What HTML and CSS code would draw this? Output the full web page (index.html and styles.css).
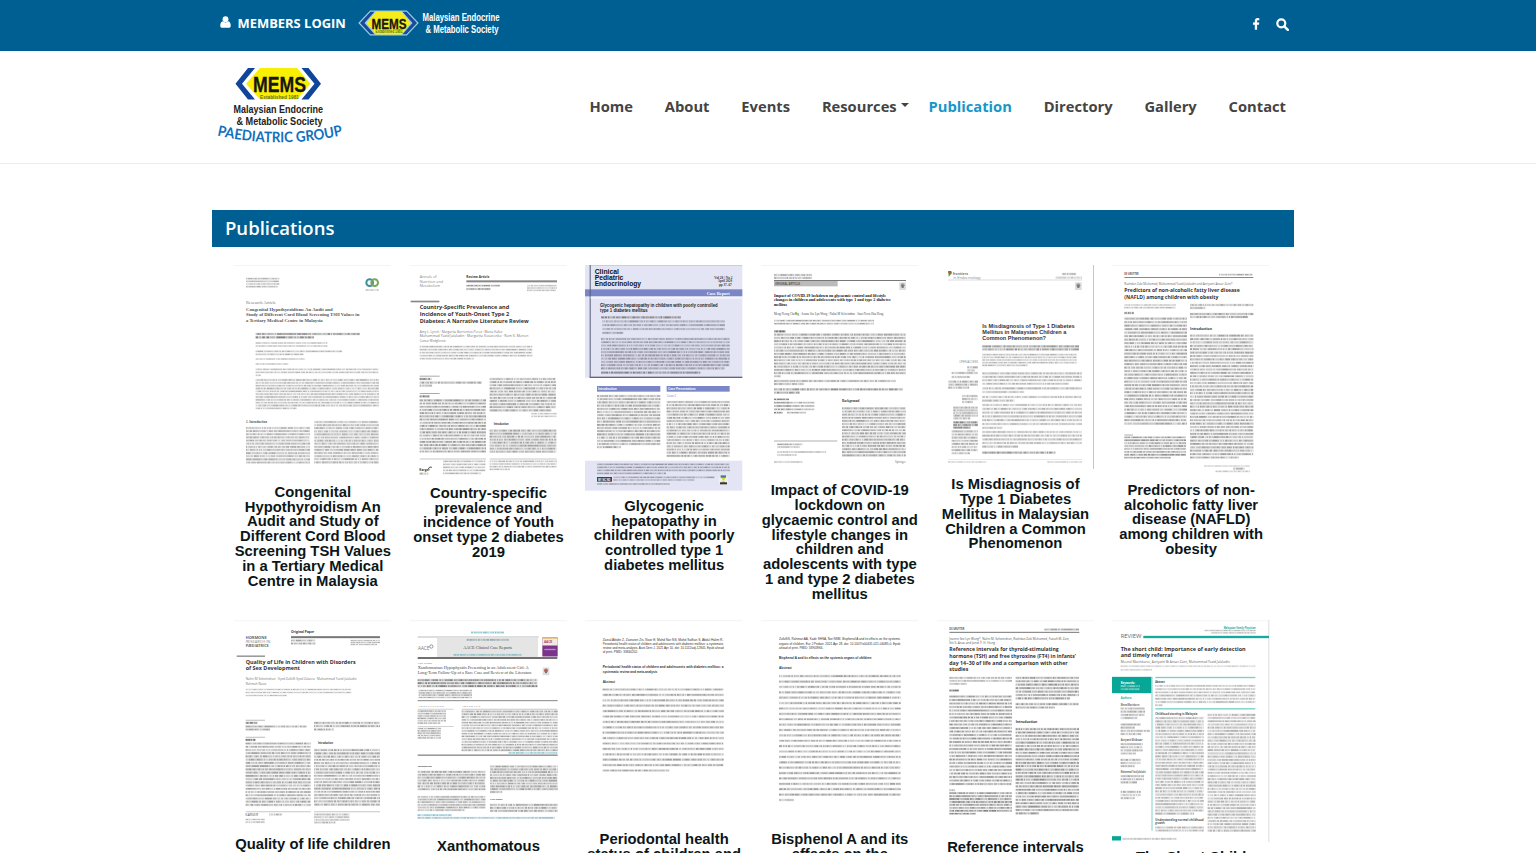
FILE: index.html
```html
<!DOCTYPE html>
<html lang="en">
<head>
<meta charset="utf-8">
<title>Publications - MEMS Paediatric Group</title>
<link rel="stylesheet" href="styles.css">
</head>
<body>
<div class="topbar">
  <div class="topbar-inner">
    <a class="login"><svg class="user" viewBox="0 0 12 13"><circle cx="6" cy="3.4" r="3.2"/><path d="M3 5.800C1.200 6.200.3 8.400.3 10.500.3 12 1.100 12.800 2.400 12.800h7.200c1.300 0 2.100-.8 2.100-2.300 0-2.100-.9-4.300-2.700-4.700C7.300 7.300 4.700 7.300 3 5.800z"/></svg><span>MEMBERS LOGIN</span></a>
    <svg class="mems-small" viewBox="0 0 144 30">
      <path d="M12.500 3.500H48.500L59.500 15 48.500 26.500H12.500L1.500 15z" fill="#9ccbe5" stroke="#9ccbe5" stroke-width="1.800"/>
      <path d="M12.500 3.800h4L6.500 15l10 11.200h-4L2 15zM48.500 3.800h-4L54.500 15l-10 11.200h4L59 15z" fill="#174b99"/>
      <path d="M18 3.500H43.500L52.500 15 43.500 26.500H18L8.500 15z" fill="#f6ec1c"/>
      <text x="13.500" y="20.500" class="logo-word" font-size="15" textLength="35" lengthAdjust="spacingAndGlyphs">MEMS</text>
      <text x="17.500" y="25.200" class="logo-est" font-size="4.500" textLength="27" lengthAdjust="spacingAndGlyphs">Established 1981</text>
      <text x="64.500" y="13.200" class="society-light" textLength="77" lengthAdjust="spacingAndGlyphs">Malaysian Endocrine</text>
      <text x="67.500" y="24.700" class="society-light" textLength="73" lengthAdjust="spacingAndGlyphs">&amp; Metabolic Society</text>
    </svg>
    <div class="tools">
      <svg class="fb" viewBox="0 0 8 13"><path d="M7.600.2v2.200H6.300c-.9 0-1.100.5-1.100 1.100V5h2.300l-.3 2.300h-2v5.500H2.700V7.300h-2V5h2V3.200C2.700 1.200 3.900.1 5.800.1z"/></svg>
      <svg class="search" viewBox="0 0 13 13"><circle cx="5.300" cy="5.300" r="4" fill="none" stroke="#fff" stroke-width="2.200"/><path d="M8.300 8.300l3.500 3.500" stroke="#fff" stroke-width="2.500" stroke-linecap="round"/></svg>
    </div>
  </div>
</div>
<header class="header">
  <div class="header-inner">
    <svg class="brand" viewBox="0 0 130 84">
      <path d="M43 3H80L93.500 18.800 80 34.500H43L29 18.800z" fill="#f9ef05"/>
      <path d="M31 3h7L25 18.800l13 15.700h-7L18.500 18.800zM84.500 3h7L104 18.800 91.500 34.500h-7l13-15.700z" fill="#10459b"/>
      <text x="36" y="26.800" class="logo-word" font-size="22.500" textLength="53" lengthAdjust="spacingAndGlyphs">MEMS</text>
      <text x="43" y="33.800" class="logo-est" font-size="5.800" textLength="39" lengthAdjust="spacingAndGlyphs">Established 1981</text>
      <text x="16.500" y="47.500" class="society" textLength="89.500" lengthAdjust="spacingAndGlyphs">Malaysian Endocrine</text>
      <text x="19.500" y="60.300" class="society" textLength="86" lengthAdjust="spacingAndGlyphs">&amp; Metabolic Society</text>
      <path id="arc" d="M0 70.500Q63 84.500 126.500 70" fill="none"/>
      <text class="group"><textPath href="#arc" textLength="127" lengthAdjust="spacingAndGlyphs">PAEDIATRIC GROUP</textPath></text>
    </svg>
    <nav class="nav">
      <a>Home</a><a>About</a><a>Events</a><a class="has-menu">Resources<i class="caret"></i></a><a class="active">Publication</a><a>Directory</a><a>Gallery</a><a>Contact</a>
    </nav>
  </div>
</header>
<main class="main">
  <h1 class="heading">Publications</h1>
  <div class="grid" id="grid"></div>
</main>
<script src="thumbs.js"></script>
</body>
</html>
```
FILE: styles.css
```css
* { box-sizing: border-box; }
body { margin: 0; height: 853px; overflow: hidden; background: #fff; font-family: "Open Sans", "Noto Sans", sans-serif; }
.topbar { height: 51px; background: #005f92; color: #fff; }
.topbar-inner { width: 1082px; margin-left: 212px; padding: 8px 5px 0 8px; display: flex; align-items: flex-start; }
.login { display: flex; align-items: flex-start; width: 138px; font-size: 12.950px; font-weight: 700; line-height: 31px; white-space: nowrap; }
.login .user { width: 11px; height: 12px; margin: 8px 6.500px 0 0; fill: #fff; }
.mems-small { width: 144px; height: 30px; overflow: visible; }
.tools { display: flex; gap: 16px; margin: 9.500px 0 0 auto; }
.fb { width: 8px; height: 12px; fill: #fff; }
.search { width: 13px; height: 13px; }
.logo-word { font-family: "Liberation Sans", Arial, sans-serif; font-weight: 700; fill: #161616; stroke: #161616; stroke-width: .3; }
.logo-est { font-family: "Liberation Sans", Arial, sans-serif; font-weight: 700; fill: #56702a; }
.society, .society-light { font: 700 11.300px "Liberation Sans", Arial, sans-serif; fill: #222; }
.society-light { font-size: 10px; fill: #fff; }
.group { font: 700 14.500px Lato, "Open Sans", sans-serif; fill: #1370bd; }
.header { height: 113px; border-bottom: 1px solid #ececec; }
.header-inner { width: 1082px; margin-left: 212px; padding: 14px 8px 0 5px; display: flex; justify-content: space-between; align-items: flex-start; }
.brand { width: 130px; height: 84px; overflow: visible; }
.nav { display: flex; gap: 31.850px; padding-top: 28px; font-size: 14.730px; font-weight: 700; line-height: 27px; color: #444; }
.has-menu { display: flex; align-items: center; margin-right: -12px; }
.caret { margin: -3px 0 0 4px; border: 4px solid transparent; border-top-color: #444; border-bottom: 0; }
.active { color: #1697c9; }
.main { width: 1082px; height: 643px; margin: 46px 0 0 212px; overflow: hidden; }
.heading { margin: 0; height: 37px; padding-left: 13px; background: #005f92; color: #fff; font-size: 18.500px; font-weight: 600; line-height: 35.500px; }
.grid { display: grid; grid-template-columns: repeat(6, 175.670px); grid-auto-rows: 354.500px; padding: 18.300px 0 0 13px; }
.card { padding: 0 9.170px; }
.thumb { display: block; width: 157.330px; }
.title { margin: 8px -8px 0; font: 700 14.800px/14.800px "Liberation Sans", Arial, sans-serif; color: #0b1618; text-align: center; white-space: pre-line; }
.sans { font-family: "Liberation Sans", Arial, sans-serif; }
.serif { font-family: "Liberation Serif", "Times New Roman", serif; }
.human { font-family: "Open Sans", sans-serif; }
```
FILE: thumbs.js
```js
// Each page thumbnail is drawn at three units per pixel.
let seed = 7;
const rnd = () => (seed = (seed * 16807) % 2147483647) / 2147483647;
const R = (x, y, w, h, c = '#777') => `<rect x="${x}" y="${y}" width="${w}" height="${h}" fill="${c}"/>`;
const T = (x, y, s, w, size, cls = 'human', c = '#333', b = 700) =>
  `<text x="${x}" y="${y}" class="${cls}" font-size="${size}" font-weight="${b}" fill="${c}" textLength="${w}" lengthAdjust="spacingAndGlyphs">${s}</text>`;
// Paragraph: word-like strokes, n lines, over a pale band that stands for the ascenders
function P(x, y, w, n, step = 10.5, c = '#a2a2a2', last = .7, sw = 5) {
  let out = '';
  for (let i = 0; i < n; i++) {
    const end = x + (i === n - 1 ? w * last : w);
    const ly = (y + i * step).toFixed(1);
    const d = ['', '', ''];
    let px = x;
    while (px < end) {
      const len = Math.min(end - px, 2 + rnd() * 6);
      d[Math.floor(rnd() * 3)] += `M${px.toFixed(1)} ${ly}h${len.toFixed(1)}`;
      px += len + (rnd() < .3 ? 3 : .4);
    }
    out += `<path d="M${x} ${ly}H${end.toFixed(1)}" stroke="${c}" stroke-opacity=".22" stroke-width="${sw + 3}"/>`;
    d.forEach((p, k) => { if (p) out += `<path d="${p}" stroke="${c}" stroke-opacity="${[.45, .68, .9][k]}" stroke-width="${sw}"/>`; });
  }
  return out;
}
const badge = (x, y, c = '#999') => R(x, y, 20, 23, '#ddd') + `<circle cx="${x + 10}" cy="${y + 9}" r="6" fill="${c}"/>` + R(x + 7, y + 8, 6, 9, '#777');
const top1 = (x, y) => R(x, y, 472, 3, '#f4f4f4');

const docs = [
  { x: 27, y: 31, h: 211.5, t: 'Congenital\nHypothyroidism An\nAudit and Study of\nDifferent Cord Blood\nScreening TSH Values\nin a Tertiary Medical\nCentre in Malaysia', d: () =>
    top1(27, 31) + P(63, 72, 100, 4, 8, '#a5a5a5', .95, 3.5) +
    '<circle cx="434" cy="84" r="10" fill="none" stroke="#3d8f9d" stroke-width="6"/><circle cx="449" cy="84" r="10" fill="none" stroke="#78a65a" stroke-width="6"/>' + P(422, 106, 40, 1, 8, '#aaa', 1, 3) +
    T(63, 149, 'Research Article', 90, 12, 'serif', '#777', 400) +
    T(63, 169, 'Congenital Hypothyroidism: An Audit and', 260, 14, 'serif', '#555') + T(63, 185, 'Study of Different Cord Blood Screening TSH Values in', 340, 14, 'serif', '#555') + T(63, 201, 'a Tertiary Medical Centre in Malaysia', 230, 14, 'serif', '#555') +
    P(92, 238, 312, 2, 10, '#777', .56) + P(92, 265, 215, 2, 9, '#aaa', 1, 3.5) + P(92, 290, 260, 2, 9, '#aaa', .55, 3.5) + P(92, 313, 147, 1, 9, '#aaa', 1, 3.5) + P(92, 328, 98, 1, 9, '#aaa', 1, 3.5) +
    P(92, 344, 368, 3, 9, '#b0b0b0', .04, 3.5) + P(92, 376, 370, 11, 8.5, '#aaa', .33, 4) +
    T(63, 506, '1. Introduction', 63, 10, 'serif', '#555') + P(63, 520, 192, 12, 9.4, '#a6a6a6', 1) + P(268, 502, 193, 14, 9.3, '#a6a6a6', 1) },
  { x: 554, y: 31, h: 212.5, t: 'Country-specific\nprevalence and\nincidence of Youth\nonset type 2 diabetes\n2019', d: () =>
    top1(554, 31) + T(583, 71, 'Annals of', 51, 11, 'human', '#888', 400) + T(583, 84, 'Nutrition and', 70, 11, 'human', '#888', 400) + T(583, 97, 'Metabolism', 61, 11, 'human', '#888', 400) +
    T(723, 70, 'Review Article', 69, 10) + R(723, 77, 272, 6, '#888') + P(723, 93, 100, 2, 10, '#888', .72, 4) + P(905, 93, 90, 3, 7, '#aaa', .96, 3) +
    R(556, 138, 86, 5, '#888') + T(583, 163, 'Country-Specific Prevalence and', 269, 17) + T(583, 183, 'Incidence of Youth-Onset Type 2', 269, 17) + T(583, 204, 'Diabetes: A Narrative Literature Review', 327, 17) +
    T(583, 234, 'Amy L. Lynch · Margarita Barrientos-Perez · Mona Hafez', 248, 11, 'human', '#777', 400) + T(583, 248, 'Muhammad Yazid Jalaludin · Margarita Kovarenko · Ram K. Menon', 326, 11, 'human', '#777', 400) + T(583, 262, 'Caesar Wedgforest', 78, 10, 'human', '#777', 400) +
    P(583, 276, 338, 5, 9, '#aaa', .48, 4) + R(583, 363, 60, 3, '#aaa') + P(583, 373, 35, 1, 9, '#666', 1) + P(583, 384, 187, 2, 9, '#999', .2) + R(583, 415, 60, 3, '#aaa') + P(583, 425, 31, 1, 9, '#666', 1) + P(583, 437, 199, 17, 9.6, '#909090', 1) +
    P(793, 373, 199, 11, 9.4, '#999', .93) + P(918, 477, 76, 2, 8, '#aaa', 1, 3) + T(805, 510, 'Introduction', 45, 8) + P(793, 528, 200, 8, 9, '#999', 1) + R(583, 612, 199, 2, '#aaa') + R(793, 612, 201, 2, '#aaa') + P(653, 620, 127, 5, 9, '#aaa', .9, 3.5) + P(793, 620, 201, 4, 8, '#aaa', .3, 3.5) + T(582, 648, 'Karger', 31, 11) + '<path d="M609 643l4-6 7 1" stroke="#555" fill="none" stroke-width="3"/>' + P(583, 657, 37, 1, 9) },
  { x: 31, y: 31, h: 225.5, t: 'Glycogenic\nhepatopathy in\nchildren with poorly\ncontrolled type 1\ndiabetes mellitus', d: () =>
    R(31, 31, 472, 338, '#e4e5f4') + R(31, 104, 472, 21, '#7b86c7') + R(46, 31, 457, 2, '#bcc0dc') + R(45, 31, 3, 338, '#555b78') + R(45, 366, 458, 4, '#62677d') + R(48, 126, 455, 6, '#f4f4fa') +
    T(60, 57, 'Clinical', 73, 19, 'sans', '#111') + T(60, 76, 'Pediatric', 86, 19, 'sans', '#111') + T(60, 94, 'Endocrinology', 139, 19, 'sans', '#111') +
    T(419, 72, 'Vol 28 / No 2', 54, 9, 'serif') + T(429, 82, 'April 2020', 43, 9, 'serif') + T(433, 93, 'pp 37–67', 38, 9, 'serif') + T(396, 120, 'Case Report', 69, 14, 'serif', '#fff') +
    T(76, 158, 'Glycogenic hepatopathy in children with poorly controlled', 353, 14, 'sans', '#222') + T(76, 171, 'type 1 diabetes mellitus', 143, 14, 'sans', '#222') +
    P(79, 188, 239, 1, 9, '#777', 1) + P(83, 200, 368, 4, 11.5, '#9294a3', .17) + P(79, 253, 386, 10, 9.8, '#8d8f9e', .96) + P(79, 354, 298, 1, 9, '#737584', 1) +
    R(67, 394, 190, 17, '#7b86c7') + R(276, 394, 189, 17, '#7b86c7') + T(70, 407, 'Introduction', 56, 9, 'sans', '#fff') + T(280, 407, 'Case Presentations', 83, 9, 'sans', '#fff') + P(67, 424, 190, 17, 9.6, '#999', .38) + T(276, 427, 'Case 1', 28, 9, 'sans', '#7b86c7', 400) + P(276, 442, 189, 18, 9.5, '#999', 1) +
    R(31, 618, 472, 90, '#e4e5f4') + P(67, 629, 398, 4, 9, '#8b8d9b', .52, 4) + R(67, 667, 45, 14, '#444') + T(71, 678, 'BY NC ND', 36, 9, 'sans', '#fff') + P(116, 668, 303, 2, 8, '#9294a3', .8, 3.5) + P(67, 688, 218, 1, 9, '#888', 1, 3.5) + '<circle cx="446" cy="676" r="15" fill="#eee"/><path d="M437 665h18l-8 15zM436 688h20l-10-12z" fill="#d8d543"/>' + R(438, 662, 16, 7, '#447b99') + R(436, 683, 21, 6, '#333') },
  { x: 558, y: 31, h: 210, t: 'Impact of COVID-19\nlockdown on\nglycaemic control and\nlifestyle changes in\nchildren and\nadolescents with type\n1 and type 2 diabetes\nmellitus', d: () =>
    top1(558, 31) + P(597, 61, 114, 2, 9, '#999', 1, 4) + R(597, 76, 396, 3, '#777') + R(597, 79, 191, 16, '#bbb') + T(600, 90, 'ORIGINAL ARTICLE', 75, 9, 'sans', '#555') + badge(973, 83) +
    T(597, 126, 'Impact of COVID-19 lockdown on glycaemic control and lifestyle', 336, 13, 'serif', '#111') + T(597, 140, 'changes in children and adolescents with type 1 and type 2 diabetes', 350, 13, 'serif', '#111') + T(597, 154, 'mellitus', 39, 13, 'serif', '#111') +
    T(597, 180, 'Meng-Yeong Cheong · Jeanne Sze Lyn Wong · Nalini M Selveindran · Janet Yeow Hua Hong', 328, 10, 'serif', '#444', 400) + '<circle cx="663" cy="176" r="4" fill="#80d240"/>' + P(597, 198, 300, 2, 9, '#999', 1, 3.500) + P(597, 230, 34, 1, 9, '#555', 1) + P(597, 240, 395, 14, 9.6, '#999', .05) + P(597, 379, 366, 2, 9, '#999', .25) + P(597, 404, 386, 2, 10, '#888', .2) +
    P(597, 434, 45, 5, 10, '#777', .6, 4) + P(636, 444, 82, 4, 10, '#999', .7, 4) + T(801, 443, 'Background', 52, 9, 'serif') + P(801, 461, 191, 16, 9.4, '#999', 1) + R(597, 558, 190, 2, '#888') + P(607, 569, 76, 2, 8, '#999', .9, 3.5) + P(607, 592, 146, 2, 9, '#999', .4, 3.5) + P(597, 622, 85, 1, 8, '#aaa', 1, 3.5) + T(960, 626, 'Springer', 32, 9, 'serif', '#777', 400) },
  { x: 35, y: 31, h: 204, t: 'Is Misdiagnosis of\nType 1 Diabetes\nMellitus in Malaysian\nChildren a Common\nPhenomenon', d: () =>
    R(504, 31, 3, 612, '#aaa') + '<path d="M69 49h9l2 7-10 10z" fill="#4b9b5d"/><path d="M69 49h7v7h-7z" fill="#bf4f33"/>' + T(82, 62, 'frontiers', 46, 11, 'human', '#777') + T(84, 73, 'in Endocrinology', 82, 10, 'sans', '#999', 400) + P(411, 58, 59, 1) + P(391, 69, 79, 1, 9, '#bbb', 1) + R(68, 75, 402, 2, '#ccc') + badge(449, 83) +
    T(171, 221, 'Is Misdiagnosis of Type 1 Diabetes', 277, 16, 'sans') + T(171, 239, 'Mellitus in Malaysian Children a', 252, 16, 'sans') + T(171, 257, 'Common Phenomenon?', 191, 16, 'sans') +
    P(171, 275, 290, 2, 9, '#888', 1) + P(171, 300, 283, 5, 8, '#aaa', .48, 3.5) +
    P(171, 356, 299, 4, 10.4, '#aaa', .87) + P(171, 401, 299, 2, 11, '#aaa', .42) + P(171, 427, 299, 2, 11, '#aaa', .32) + P(171, 451, 299, 7, 11.4, '#aaa', .2) + P(171, 532, 299, 5, 11, '#aaa', .36) + P(171, 594, 219, 1, 9, '#888', 1) +
    T(102, 325, 'OPEN ACCESS', 56, 8, 'sans', '#888', 400) + P(126, 338, 32, 2, 9) + P(79, 355, 78, 2, 12) + P(69, 381, 89, 3, 9) + P(110, 424, 47, 3, 9) + P(84, 459, 73, 5, 8) + P(84, 503, 74, 3, 8, '#777') + P(79, 530, 78, 8, 9.4) + R(68, 613, 402, 2, '#ddd') + P(68, 622, 115, 1, 8, '#bbb', 1, 3) + P(366, 622, 104, 1, 8, '#bbb', 1, 3) },
  { x: 562, y: 31, h: 209.5, t: 'Predictors of non-\nalcoholic fatty liver\ndisease (NAFLD)\namong children with\nobesity', d: () =>
    top1(562, 31) + T(599, 62, 'DE GRUYTER', 43, 8, 'human', '#555') + P(883, 60, 102, 1, 8, '#999', 1, 4) + R(599, 67, 387, 3, '#888') + T(599, 91, 'Rashdan Zaki Mohamed, Muhammad Yazid Jalaludin and Azriyanti Anuar Zaini*', 325, 10, 'human', '#666', 400) + T(599, 112, 'Predictors of non-alcoholic fatty liver disease', 346, 16) + T(599, 133, '(NAFLD) among children with obesity', 282, 16) +
    P(599, 151, 154, 2, 8, '#aaa', 1, 3.5) + P(599, 175, 28, 1, 9, '#666', 1) + P(599, 192, 188, 31, 10.5, '#999', 1) + P(796, 151, 190, 2, 9, '#999', .25) + P(796, 178, 190, 2, 9, '#888', .92) + T(796, 226, 'Introduction', 66, 11) + P(796, 243, 190, 37, 10.15, '#999', .77) + R(599, 540, 26, 2, '#888') + P(599, 548, 185, 8, 8.7, '#888', .75, 4) + P(838, 634, 137, 1, 8, '#bbb', 1, 3.5) + P(925, 642, 50, 1) + P(873, 650, 102, 1, 8, '#bbb', 1, 3.5) },
  { x: 27, y: 14.5, h: 209.5, t: 'Quality of life children', d: () =>
    top1(27, 15) + T(62, 73, 'HORMONE', 63, 10, 'human', '#666') + T(62, 85, 'RESEARCH IN', 74, 10, 'human', '#888', 400) + T(62, 97, 'PÆDIATRICS', 69, 9, 'human', '#666') + T(198, 53, 'Original Paper', 70, 10) + R(198, 63, 267, 6, '#777') + P(198, 76, 73, 2, 9, '#999', 1, 4) + P(377, 76, 88, 3, 6, '#aaa', .9, 3) + R(35, 121, 85, 4, '#888') + T(62, 146, 'Quality of Life in Children with Disorders', 330, 16) + T(62, 166, 'of Sex Development', 163, 16) +
    T(62, 194, 'Nalini M Selveindran · Syed Zulkifli Syed Zakaria · Muhammad Yazid Jalaludin', 333, 10, 'human', '#777', 400) + T(62, 209, 'Rahmah Rasat', 62, 10, 'human', '#777', 400) + P(62, 223, 317, 3, 9, '#aaa', .39, 3.5) + R(62, 314, 58, 2, '#999') + P(62, 323, 36, 1, 9, '#666', 1) + P(62, 334, 183, 2, 9, '#999', .4) + P(267, 323, 198, 3, 10, '#999', .3) + R(62, 365, 58, 2, '#999') + P(62, 374, 29, 1, 9, '#666', 1) + P(62, 385, 195, 20, 9.7, '#999', 1) + T(279, 388, 'Introduction', 45, 9) + P(267, 405, 198, 18, 9.6, '#999', 1) + R(62, 589, 195, 2, '#aaa') + R(267, 589, 198, 2, '#aaa') + T(61, 602, 'KARGER', 38, 10, 'human', '#555', 400) + P(133, 598, 55, 1) + P(62, 613, 57, 2, 8, '#aaa', 1, 3.5) + P(267, 598, 107, 4, 8, '#aaa', .6, 4) },
  { x: 554, y: 14.5, h: 211.3, t: 'Xanthomatous', d: () =>
    top1(554, 15) + P(737, 52, 99, 1, 8, '#65b7c9', 1, 4) + R(577, 64, 363, 3, '#bbb') + R(635, 67, 303, 59, '#e5e5e5') + R(577, 126, 419, 5, '#555') + T(578, 105, 'AACE', 34, 15, 'human', '#777', 400) + '<circle cx="618" cy="94" r="5" fill="none" stroke="#666" stroke-width="2"/>' + P(724, 74, 127, 1, 8, '#7f9ba0', 1, 4) + T(714, 101, 'AACE Clinical Case Reports', 146, 13, 'serif', '#444', 400) + P(685, 119, 204, 1, 8, '#78b4bd', 1, 4) + R(951, 67, 46, 57, '#7a348c') + R(951, 67, 46, 24, '#f4eae1') + R(951, 67, 46, 3, '#d9a23c') + T(956, 83, 'AACE', 25, 8, 'sans', '#993d82') + R(957, 101, 34, 4, '#b98bc2') +
    T(577, 146, 'Case Report', 43, 8, 'serif', '#666', 400) + T(577, 163, 'Xanthomatous Hypophysitis Presenting in an Adolescent Girl: A', 333, 13, 'serif', '#444', 400) + T(577, 177, 'Long-Term Follow-Up of a Rare Case and Review of the Literature', 343, 13, 'serif', '#444', 400) + badge(952, 157, '#d65d48') + P(577, 195, 359, 3, 9, '#777', 1) + P(580, 226, 160, 4, 7, '#999', 1, 3.5) + R(577, 255, 420, 3, '#888') + T(578, 276, 'A R T I C L E  I N F O', 78, 8, 'serif', '#888') + T(709, 276, 'A B S T R A C T', 56, 8, 'serif', '#888') + R(577, 281, 108, 2, '#bbb') + P(577, 288, 85, 6, 7.2, '#999', .8, 3.5) + R(577, 333, 108, 2, '#bbb') + P(577, 340, 70, 5, 7, '#999', 1, 3.5) + R(709, 281, 287, 2, '#aaa') + P(709, 289, 288, 15, 8.3, '#999', 1, 4) + P(850, 413, 146, 1, 8, '#70b8c4', 1, 4) + R(577, 418, 420, 4, '#888') +
    T(577, 455, 'Introduction', 42, 8, 'serif') + P(577, 470, 203, 7, 8.7, '#999', 1) + P(794, 454, 203, 10, 8.5, '#999', .18) + P(577, 545, 203, 6, 8, '#999', .7, 4) + T(794, 554, 'Case Report', 38, 8, 'serif') + P(794, 569, 203, 3, 9, '#999', 1) + P(577, 600, 103, 1, 8, '#69afd0', 1, 4) + P(577, 608, 411, 1, 8, '#7fafc0', 1, 4) },
  { x: 31, y: 14.5, h: 204.3, t: 'Periodontal health\nstatus of children and', d: () =>
    top1(31, 15) + T(84, 79, 'Zainal Abidin Z, Zainuren Zis, Noor E, Mohd Nor NS, Mohd Saffian S, Abdul Halim R.', 362, 9, 'sans', '#333', 400) + T(84, 91, 'Periodontal health status of children and adolescents with diabetes mellitus: a systematic', 363, 9, 'sans', '#333', 400) + T(84, 103, 'review and meta-analysis. Aust Dent J. 2021 Apr 10. doi: 10.1111/adj.12845. Epub ahead', 363, 9, 'sans', '#333', 400) + T(84, 115, 'of print. PMID: 33840202.', 106, 9, 'sans', '#333', 400) + T(84, 159, 'Periodontal health status of children and adolescents with diabetes mellitus: a', 363, 10, 'sans', '#333') + T(84, 175, 'systematic review and meta-analysis', 164, 10, 'sans', '#333') + T(84, 203, 'Abstract', 37, 9, 'sans') + P(84, 223, 363, 16, 16.2, '#999', .55, 5) },
  { x: 558, y: 14.5, h: 204.3, t: 'Bisphenol A and its\neffects on the', d: () =>
    top1(558, 15) + T(612, 76, 'ZulkifliS, Rahman AA, Kadir SHSA, Nor NSM. Bisphenol A and its effects on the systemic', 364, 9, 'sans', '#333', 400) + T(612, 89, 'organs of children. Eur J Pediatr. 2021 Apr 28. doi: 10.1007/s00431-021-04085-0. Epub', 364, 9, 'sans', '#333', 400) + T(612, 102, 'ahead of print. PMID: 33903966.', 133, 9, 'sans', '#333', 400) + T(612, 133, 'Bisphenol A and its effects on the systemic organs of children', 277, 9, 'sans') + T(612, 163, 'Abstract', 38, 9, 'sans') + P(612, 183, 365, 24, 16.15, '#999', .12, 5) },
  { x: 35, y: 14.5, h: 212, t: 'Reference intervals', d: () =>
    top1(35, 15) + T(72, 45, 'DE GRUYTER', 45, 8, 'human', '#555') + P(357, 43, 104, 1, 8, '#999', 1, 4) + R(72, 50, 390, 3, '#777') + T(72, 74, 'Jeanne Sze Lyn Wong*, Nalini M. Selveindran, Rashdan Zaki Mohamed, Fuziah M. Zain,', 361, 10, 'human', '#555', 400) + T(72, 86, 'Siti S. Anas and Janet Y. H. Hong', 137, 10, 'human', '#555', 400) + T(72, 107, 'Reference intervals for thyroid-stimulating', 328, 16) + T(72, 128, 'hormone (TSH) and free thyroxine (FT4) in infants’', 380, 16) + T(72, 149, 'day 14–30 of life and a comparison with other', 355, 16) + T(72, 169, 'studies', 57, 16) +
    P(72, 188, 188, 3, 9, '#999', .28, 3.5) + P(72, 226, 28, 1, 9, '#666', 1) + P(72, 244, 188, 26, 10.5, '#888', 1) + P(271, 188, 190, 7, 10.3, '#888', .86) + P(271, 267, 190, 2, 10, '#888', .62) + T(271, 325, 'Introduction', 65, 12) + P(271, 342, 190, 26, 10.1, '#888', .37) + P(72, 525, 25, 1) + P(72, 534, 188, 8, 8.8, '#777', .42, 4) },
  { x: 562, y: 14.5, h: 222, t: 'The Short Child', d: () =>
    top1(562, 15) + R(1031, 15, 3, 666, '#ddd') + T(897, 42, 'Malaysian Family Physician', 96, 10, 'human', '#16aa9d') + P(840, 46, 153, 1, 8, '#aaa', 1, 3) + P(860, 53, 133, 1, 8, '#aaa', 1, 3) + T(588, 69, 'REVIEW', 62, 16, 'human', '#666', 400) + R(656, 62, 377, 7, '#16aa9d') + T(588, 107, 'The short child: Importance of early detection', 375, 17) + T(588, 126, 'and timely referral', 155, 17) + T(588, 145, 'Meenal Mavinkurve, Azriyanti Bt Anuar Zaini, Muhammad Yazid Jalaludin', 327, 11, 'human', '#666', 400) + P(588, 153, 404, 1, 8, '#bbb', 1, 3) + P(588, 164, 94, 1, 8, '#bbb', 1, 3) +
    R(562, 185, 119, 49, '#08a696') + T(588, 206, 'Keywords:', 43, 9, 'human', '#fff') + P(588, 213, 58, 2, 9, '#a9e0d7', 1, 4) + R(680, 185, 4, 462, '#a1dcd6') + R(692, 185, 300, 4, '#78d0c8') + T(692, 205, 'Abstract', 28, 8) + P(692, 212, 300, 7, 9.7, '#aaa', .07, 4) + R(692, 279, 300, 4, '#78d0c8') + T(588, 253, 'Authors:', 34, 10, 'human', '#35aaa0') +
    T(588, 272, 'Meenal Mavinkurve', 56, 9, 'human', '#666') + P(588, 280, 73, 4, 9.5) + P(588, 328, 60, 2, 9.5) + P(588, 347, 88, 2, 9.5) + T(588, 379, 'Azriyanti Bt Anuar', 66, 9, 'human', '#666') + P(588, 387, 66, 4, 9.3) + P(588, 434, 60, 3, 9.5) + T(588, 475, 'Muhammad Yazid Jalaludin', 75, 9, 'human', '#666') + P(588, 483, 70, 3, 9.3) + P(588, 530, 60, 3, 9.5) +
    T(692, 301, 'Childhood stunting in Malaysia', 126, 10, 'human', '#555') + P(692, 309, 145, 31, 9.55, '#aaa', .8) + T(692, 619, 'Understanding normal childhood', 145, 10, 'human', '#555') + T(692, 628, 'growth', 28, 9, 'human', '#555') + P(692, 637, 145, 2, 9, '#aaa', 1) + P(849, 299, 144, 37, 9.65, '#aaa', 1) + R(562, 663, 27, 13, '#08a696') + P(593, 671, 162, 1, 8, '#aaa', 1, 4) },
];

document.getElementById('grid').innerHTML = docs.map(o =>
  `<article class="card"><svg class="thumb" viewBox="${o.x} ${o.y} 472 ${o.h * 3}" style="height:${o.h}px" fill="none">${o.d()}</svg><div class="title">${o.t}</div></article>`).join('');
```
